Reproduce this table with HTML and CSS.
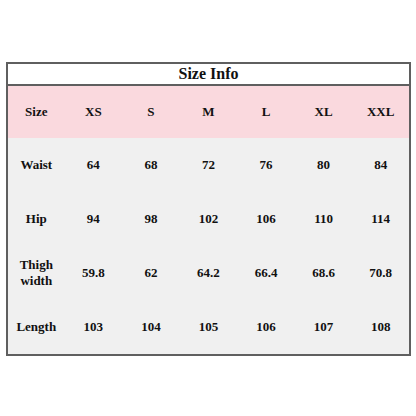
FILE: index.html
```html
<!DOCTYPE html>
<html lang="en">

<head>
    <meta charset="UTF-8">
    <title>Size Info</title>
    <link rel="stylesheet" href="styles.css">
</head>

<body>
    <table class="size-table">
        <tr class="title">
            <th colspan="7">Size Info</th>
        </tr>
        <tr class="head">
            <td>Size</td>
            <td>XS</td>
            <td>S</td>
            <td>M</td>
            <td>L</td>
            <td>XL</td>
            <td>XXL</td>
        </tr>
        <tr>
            <td>Waist</td>
            <td>64</td>
            <td>68</td>
            <td>72</td>
            <td>76</td>
            <td>80</td>
            <td>84</td>
        </tr>
        <tr>
            <td>Hip</td>
            <td>94</td>
            <td>98</td>
            <td>102</td>
            <td>106</td>
            <td>110</td>
            <td>114</td>
        </tr>
        <tr>
            <td>Thigh<br>width</td>
            <td>59.8</td>
            <td>62</td>
            <td>64.2</td>
            <td>66.4</td>
            <td>68.6</td>
            <td>70.8</td>
        </tr>
        <tr>
            <td>Length</td>
            <td>103</td>
            <td>104</td>
            <td>105</td>
            <td>106</td>
            <td>107</td>
            <td>108</td>
        </tr>
    </table>
</body>

</html>
```

FILE: styles.css
```css
* {
    padding: 0;
    margin: 0;
}

body {
    background: #fff;
    font-family: "Liberation Serif", "Times New Roman", serif;
    color: #111;
}

.size-table {
    margin: 62px 0 0 6px;
    width: 405px;
    border: 2px solid #5f5f5f;
    border-collapse: collapse;
    table-layout: fixed;
    background: #f0f0f0;
}

.size-table td,
.size-table th {
    padding: 0;
    text-align: center;
    font-weight: bold;
    font-size: 13px;
    line-height: 16px;
    height: 54px;
}

/* 标题 */
.size-table .title th {
    height: 20px;
    font-size: 16px;
    line-height: 20px;
    background: #fff;
    border-bottom: 2px solid #5f5f5f;
}

.size-table .head td {
    height: 52px;
    background: #fad9de;
}
```
